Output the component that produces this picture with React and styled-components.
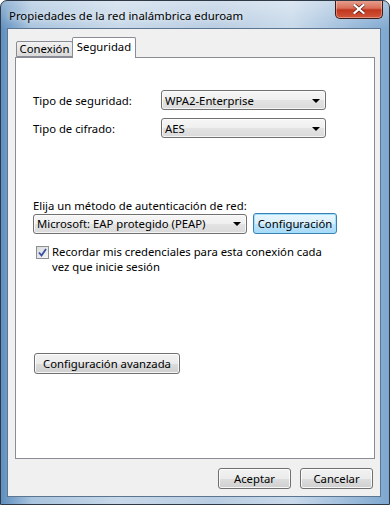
import React from "react";
import styled, { createGlobalStyle } from "styled-components";

const GlobalStyle = createGlobalStyle`
  html, body {
    margin: 0;
    padding: 0;
    background: #ffffff;
  }
  body {
    font-family: "Noto Sans", "Open Sans", sans-serif;
    font-size: 11.3px;
    color: #000;
  }
`;

const Window = styled.div`
  width: 390px;
  height: 505px;
  box-sizing: border-box;
  display: flex;
  flex-direction: column;
  border: 1px solid #2f3a46;
  border-radius: 7px 7px 0 0;
  background:
    linear-gradient(180deg, rgba(255, 255, 255, 0.35) 0px, rgba(255, 255, 255, 0) 28px),
    linear-gradient(90deg, #5f8fbf 0%, #a9c4de 8%, #c7d8e9 30%, #b9cde2 55%, #c8d9ea 75%, #7fa8d0 100%);
  overflow: hidden;
`;

const TitleBar = styled.div`
  height: 27px;
  display: flex;
  align-items: flex-start;
  justify-content: space-between;
  padding-left: 8px;
`;

const Title = styled.div`
  margin-top: 7px;
  font-size: 11.4px;
  color: #000;
  text-shadow: 0 0 6px rgba(255, 255, 255, 0.9);
`;

const CloseButton = styled.div`
  width: 48px;
  height: 19px;
  margin-right: 6px;
  margin-top: -1px;
  box-sizing: border-box;
  border: 1px solid #3b1b14;
  border-top: none;
  border-radius: 0 0 5px 5px;
  background: linear-gradient(180deg, #e8a393 0%, #d9705a 45%, #c2371d 55%, #d2573b 100%);
  display: flex;
  align-items: center;
  justify-content: center;
  box-shadow: inset 0 0 0 1px rgba(255, 255, 255, 0.35);
`;

const Client = styled.div`
  flex: 1;
  margin: 0 8px 7px 6px;
  background: #f0f0f0;
  border: 1px solid #5c7590;
  display: flex;
  flex-direction: column;
  padding: 8px 7px 0 7px;
`;

const Tabs = styled.div`
  display: flex;
  align-items: flex-end;
  height: 20px;
  margin-left: 1px;
  position: relative;
  z-index: 2;
`;

const Tab = styled.div`
  box-sizing: border-box;
  width: ${({ $w }) => $w}px;
  height: ${({ $active }) => ($active ? "21px" : "16px")};
  border: 1px solid #898c95;
  border-bottom: ${({ $active }) => ($active ? "none" : "1px solid #898c95")};
  margin-left: ${({ $active }) => ($active ? "-1px" : "0")};
  margin-bottom: ${({ $active }) => ($active ? "-1px" : "0")};
  border-radius: 2px 2px 0 0;
  background: ${({ $active }) =>
    $active ? "#ffffff" : "linear-gradient(180deg, #f2f2f2 0%, #e6e6e6 50%, #d9d9d9 100%)"};
  display: flex;
  justify-content: center;
  align-items: ${({ $active }) => ($active ? "flex-start" : "center")};
  padding-top: ${({ $active }) => ($active ? "1px" : "0")};
  line-height: 16px;
  white-space: nowrap;
`;

const Pane = styled.div`
  box-sizing: border-box;
  width: 360px;
  height: 402px;
  background: #ffffff;
  border: 1px solid #898c95;
  padding: 32px 0 0 17px;
  display: flex;
  flex-direction: column;
`;

const FieldRow = styled.div`
  display: flex;
  align-items: center;
  height: 20px;
  margin-bottom: ${({ $gap }) => $gap || 0}px;
`;

const Label = styled.div`
  width: 128px;
`;

const Select = styled.div`
  box-sizing: border-box;
  width: ${({ $w }) => $w}px;
  height: 20px;
  border: 1px solid #707070;
  border-radius: 3px;
  background: linear-gradient(180deg, #f6f6f6 0%, #efefef 50%, #e3e3e3 51%, #dadada 100%);
  display: flex;
  align-items: center;
  justify-content: space-between;
  padding: 0 5px 0 3px;
  box-shadow: inset 0 0 0 1px rgba(255, 255, 255, 0.7);
`;

const Arrow = styled.span`
  width: 0;
  height: 0;
  border-left: 4px solid transparent;
  border-right: 4px solid transparent;
  border-top: 4px solid #000;
  margin-top: 1px;
`;

const SectionLabel = styled.div`
  margin-top: 60px;
  height: 15px;
  line-height: 15px;
`;

const MethodRow = styled.div`
  display: flex;
  align-items: center;
  gap: 6px;
`;

const Button = styled.div`
  box-sizing: border-box;
  width: ${({ $w }) => $w}px;
  height: 21px;
  border: 1px solid ${({ $focus }) => ($focus ? "#3c7fb1" : "#707070")};
  border-radius: 3px;
  background: ${({ $focus }) =>
    $focus
      ? "linear-gradient(180deg, #eaf6fd 0%, #d9f0fc 50%, #bee6fd 51%, #a7d9f5 100%)"
      : "linear-gradient(180deg, #f2f2f2 0%, #ebebeb 50%, #dddddd 51%, #cfcfcf 100%)"};
  box-shadow: inset 0 0 0 1px ${({ $focus }) => ($focus ? "#9ee0fd" : "rgba(255,255,255,0.8)")};
  display: flex;
  align-items: center;
  justify-content: center;
`;

const CheckRow = styled.div`
  display: flex;
  align-items: flex-start;
  margin-top: 10px;
  padding-left: 3px;
`;

const Check = styled.div`
  width: 13px;
  height: 13px;
  box-sizing: border-box;
  border: 1px solid #8e8f8f;
  background: linear-gradient(135deg, #d8dbdf 0%, #f4f4f4 100%);
  margin-top: 2px;
  margin-right: 3px;
  flex-shrink: 0;
  display: flex;
  align-items: center;
  justify-content: center;
`;

const CheckText = styled.div`
  line-height: 15px;
  width: 270px;
`;

const AdvancedWrap = styled.div`
  margin-top: 79px;
  padding-left: 1px;
`;

const Footer = styled.div`
  display: flex;
  justify-content: flex-end;
  gap: 9px;
  margin-top: 9px;
`;

export default function App() {
  return (
    <>
      <GlobalStyle />
      <Window>
        <TitleBar>
          <Title>Propiedades de la red inalámbrica eduroam</Title>
          <CloseButton>
            <svg width="12" height="10" viewBox="0 0 12 10">
              <path
                d="M1.5 1 L10.5 9 M10.5 1 L1.5 9"
                stroke="#5a1a10"
                strokeWidth="3.6"
                strokeLinecap="square"
              />
              <path
                d="M1.5 1 L10.5 9 M10.5 1 L1.5 9"
                stroke="#ffffff"
                strokeWidth="2.2"
                strokeLinecap="square"
              />
            </svg>
          </CloseButton>
        </TitleBar>
        <Client>
          <Tabs>
            <Tab $w={57}>Conexión</Tab>
            <Tab $w={64} $active>
              Seguridad
            </Tab>
          </Tabs>
          <Pane>
            <FieldRow $gap={8}>
              <Label>Tipo de seguridad:</Label>
              <Select $w={165}>
                <span>WPA2-Enterprise</span>
                <Arrow />
              </Select>
            </FieldRow>
            <FieldRow>
              <Label>Tipo de cifrado:</Label>
              <Select $w={165}>
                <span>AES</span>
                <Arrow />
              </Select>
            </FieldRow>
            <SectionLabel>Elija un método de autenticación de red:</SectionLabel>
            <MethodRow>
              <Select $w={214}>
                <span>Microsoft: EAP protegido (PEAP)</span>
                <Arrow />
              </Select>
              <Button $w={84} $focus>
                Configuración
              </Button>
            </MethodRow>
            <CheckRow>
              <Check>
                <svg width="9" height="9" viewBox="0 0 9 9">
                  <path
                    d="M1 4.5 L3.5 7.5 L8 1"
                    fill="none"
                    stroke="#3a4fa0"
                    strokeWidth="1.8"
                  />
                </svg>
              </Check>
              <CheckText>
                Recordar mis credenciales para esta conexión cada
                <br />
                vez que inicie sesión
              </CheckText>
            </CheckRow>
            <AdvancedWrap>
              <Button $w={146}>Configuración avanzada</Button>
            </AdvancedWrap>
          </Pane>
          <Footer>
            <Button $w={73}>Aceptar</Button>
            <Button $w={73}>Cancelar</Button>
          </Footer>
        </Client>
      </Window>
    </>
  );
}
